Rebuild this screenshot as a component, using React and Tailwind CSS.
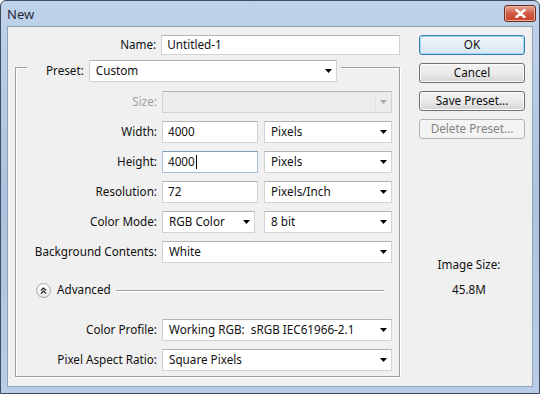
import React from "react";

const Arrow = ({ disabled }) => (
  <svg width="7" height="4" viewBox="0 0 7 4" className="shrink-0">
    <path d="M0 0h7L3.5 4z" fill={disabled ? "#a8a8a8" : "#000"} />
  </svg>
);

const Select = ({ value, width, disabled }) => (
  <div
    className={`h-[22px] flex items-center justify-between pl-[6px] pr-[4px] border border-[#d2d2d2] border-t-[#b4b4b4] ${
      disabled ? "bg-[#ececec]" : "bg-white"
    }`}
    style={{ width }}
  >
    <span className="truncate whitespace-pre">{value}</span>
    {disabled ? (
      <div className="flex items-center h-full gap-[4px]">
        <div className="w-px h-[18px] bg-[#e2e2e2]" />
        <Arrow disabled />
      </div>
    ) : (
      <Arrow />
    )}
  </div>
);

const Input = ({ value, width, caret }) => (
  <div
    className={`h-[22px] flex items-center pl-[5px] bg-white border ${
      caret ? "border-[#a9bed6] border-t-[#7f9db9]" : "border-[#d2d2d2] border-t-[#b4b4b4]"
    }`}
    style={{ width }}
  >
    <span>{value}</span>
    {caret && <span className="w-px h-[14px] bg-black ml-px" />}
  </div>
);

const Row = ({ label, disabled, children }) => (
  <div className="flex items-center gap-[5px]">
    <span className={`w-[141px] text-right ${disabled ? "text-[#a0a0a0]" : ""}`}>{label}</span>
    <div className="flex gap-[6px]">{children}</div>
  </div>
);

const Button = ({ children, primary, disabled }) => (
  <div
    className={`w-[106px] h-[20px] flex items-center justify-center rounded-[3px] border ${
      primary
        ? "border-[#3c7fb1] bg-gradient-to-b from-[#f2f7fb] to-[#d5e6f3] shadow-[inset_0_0_0_1px_#9fd5f0]"
        : disabled
        ? "border-[#adb2b5] bg-[#f4f4f4] text-[#838383]"
        : "border-[#707070] bg-gradient-to-b from-[#f2f2f2] via-[#ebebeb] to-[#d4d4d4] shadow-[inset_0_0_0_1px_#fcfcfc]"
    }`}
  >
    {children}
  </div>
);

export default function App() {
  return (
    <div className="w-[540px] h-[394px] flex flex-col border border-[#3f4a5a] rounded-t-[6px] bg-gradient-to-b from-[#bfd3ea] via-[#abc3de] to-[#b9cee6] font-['Noto_Sans',sans-serif] text-[11.7px] text-[#111] overflow-hidden">
      <div className="h-[25px] shrink-0 flex items-start justify-between pl-[6px] pr-[3px]">
        <span className="text-[13px] mt-[4px] text-[#1e2a3a]">New</span>
        <div className="mt-[4px] w-[32px] h-[17px] rounded-[3px] border border-[#6d2a1e] bg-gradient-to-b from-[#e4a593] via-[#cf5a42] to-[#c9452c] flex items-center justify-center shadow-[inset_0_0_0_1px_#eab0a2]">
          <svg width="11" height="9" viewBox="0 0 11 9">
            <path d="M1.5 1l8 7M9.5 1l-8 7" stroke="#fff" strokeWidth="2.4" strokeLinecap="round" />
          </svg>
        </div>
      </div>
      <div className="flex-1 mx-[6px] mb-[6px] bg-[#f0f0f0] border border-[#8fa3bb] flex">
        <div className="w-[392px] flex flex-col">
          <div className="mt-[8px] flex items-center gap-[5px] h-[20px]">
            <span className="w-[149px] text-right">Name:</span>
            <div className="w-[240px] h-[20px] flex items-center pl-[5px] bg-white border border-[#d2d2d2] border-t-[#b4b4b4]">
              Untitled-1
            </div>
          </div>
          <div className="relative ml-[7px] mt-[12px] h-[310px] border border-[#a0a0a0] shadow-[inset_1px_1px_0_#fff,1px_1px_0_#fff] flex flex-col pt-[23px]">
            <div className="absolute left-[11px] -top-[8px] flex items-center gap-[5px] bg-[#f0f0f0] pl-[19px] pr-[4px]">
              <span>Preset:</span>
              <Select value="Custom" width={248} />
            </div>
            <div className="flex flex-col gap-[8px]">
              <Row label="Size:" disabled>
                <Select value="" width={230} disabled />
              </Row>
              <Row label="Width:">
                <Input value="4000" width={96} />
                <Select value="Pixels" width={128} />
              </Row>
              <Row label="Height:">
                <Input value="4000" width={96} caret />
                <Select value="Pixels" width={128} />
              </Row>
              <Row label="Resolution:">
                <Input value="72" width={96} />
                <Select value="Pixels/Inch" width={128} />
              </Row>
              <Row label="Color Mode:">
                <Select value="RGB Color" width={93} />
                <div className="ml-[3px]">
                  <Select value="8 bit" width={128} />
                </div>
              </Row>
              <Row label="Background Contents:">
                <Select value="White" width={230} />
              </Row>
            </div>
            <div className="mt-[19px] h-[16px] flex items-center pl-[20px]">
              <div className="w-[15px] h-[15px] rounded-full border border-[#a7a7a7] bg-gradient-to-b from-white to-[#e6e6e6] flex items-center justify-center">
                <svg width="7" height="7" viewBox="0 0 7 7">
                  <path d="M1 3.5L3.5 1L6 3.5M1 6.5L3.5 4L6 6.5" stroke="#222" strokeWidth="1.2" fill="none" />
                </svg>
              </div>
              <span className="ml-[6px]">Advanced</span>
              <div className="ml-[5px] flex-1 mr-[15px] h-px bg-[#a0a0a0] shadow-[0_1px_0_#fff]" />
            </div>
            <div className="mt-[21px] flex flex-col gap-[8px]">
              <Row label="Color Profile:">
                <Select value="Working RGB:  sRGB IEC61966-2.1" width={230} />
              </Row>
              <Row label="Pixel Aspect Ratio:">
                <Select value="Square Pixels" width={230} />
              </Row>
            </div>
          </div>
        </div>
        <div className="flex-1 flex flex-col pl-[19px]">
          <div className="mt-[8px] flex flex-col gap-[8px]">
            <Button primary>OK</Button>
            <Button>Cancel</Button>
            <Button>Save Preset...</Button>
            <Button disabled>Delete Preset...</Button>
          </div>
          <div className="mt-[117px] -ml-[3px] w-[106px] flex flex-col items-center gap-[7px]">
            <span>Image Size:</span>
            <span>45.8M</span>
          </div>
        </div>
      </div>
    </div>
  );
}
